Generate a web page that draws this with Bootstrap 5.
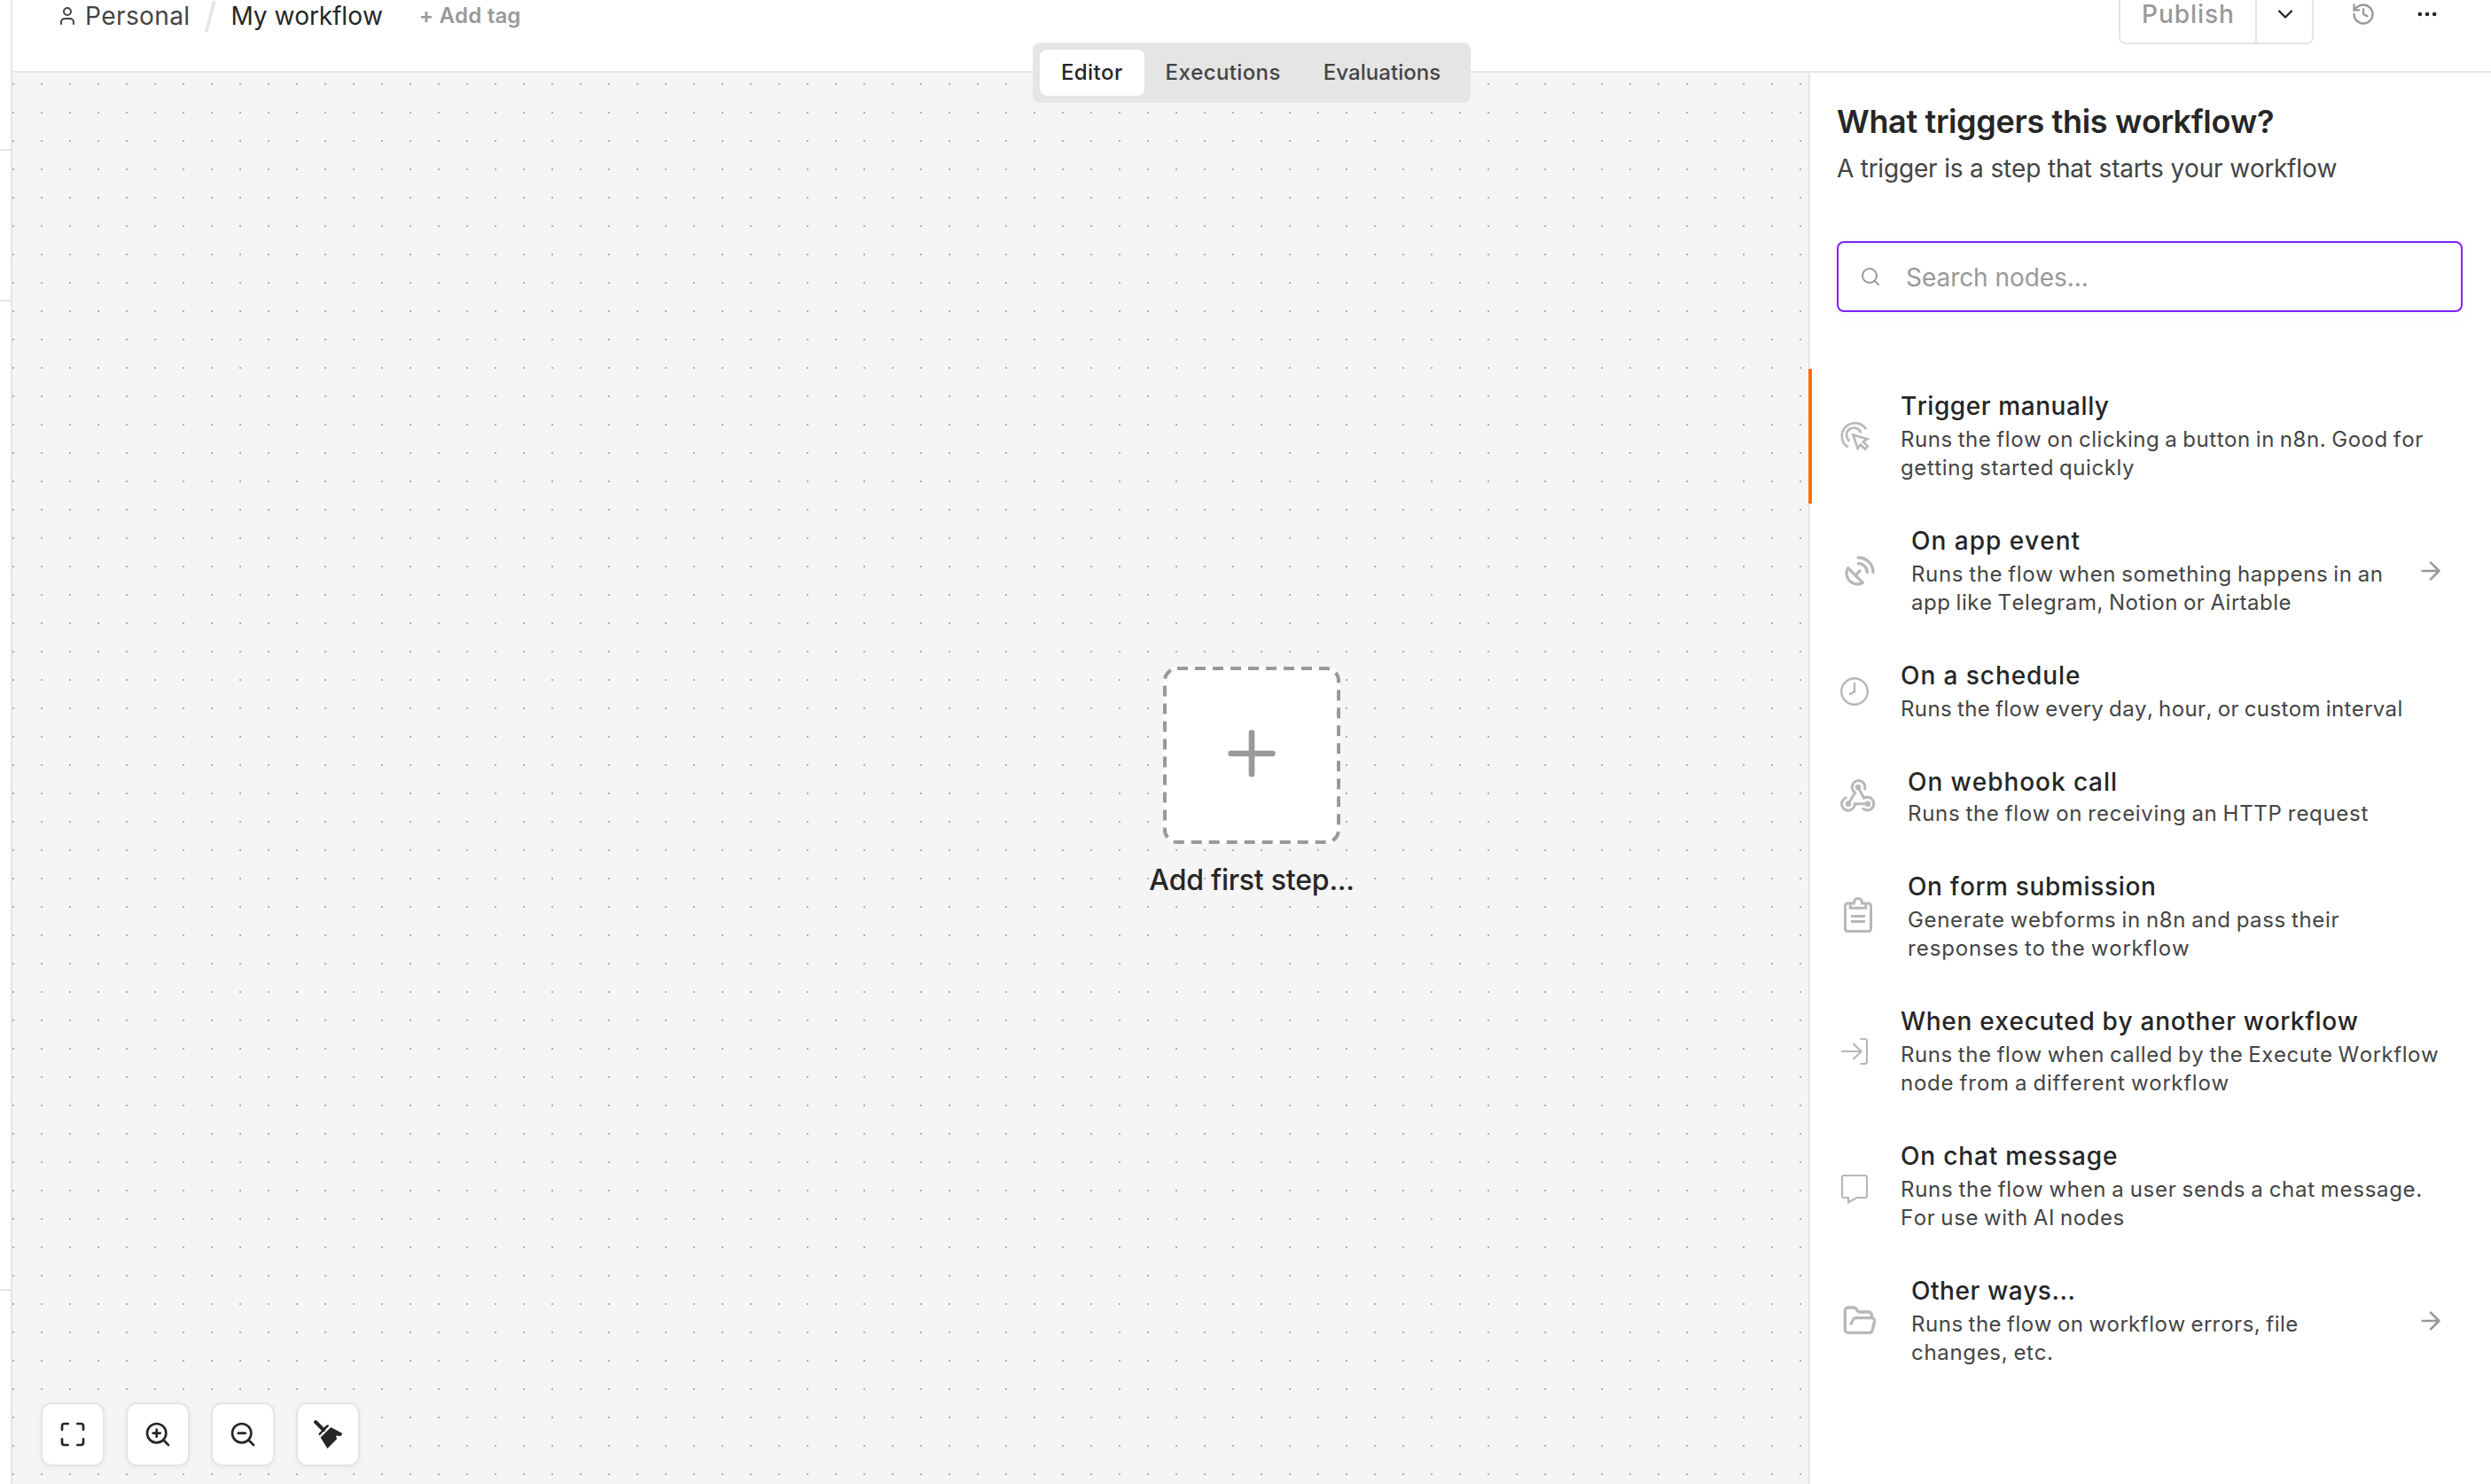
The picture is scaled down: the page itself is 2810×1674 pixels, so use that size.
<!DOCTYPE html>
<html lang="en">
<head>
<meta charset="utf-8">
<meta name="viewport" content="width=device-width, initial-scale=1">
<title>My workflow</title>
<link href="https://cdn.jsdelivr.net/npm/bootstrap@5.3.0/dist/css/bootstrap.min.css" rel="stylesheet">
<style>
body{font-family:Inter,"Liberation Sans",sans-serif;font-size:28px;color:#262626;background:#fff;overflow:hidden;font-kerning:none}
svg{fill:none;stroke:currentColor;stroke-linecap:round;stroke-linejoin:round;stroke-width:2;display:block;flex-shrink:0;overflow:visible}
.rail{width:14px;border-right:2px solid #e5e5e5;flex-shrink:0}
.rail i{display:block;height:2px;background:#e5e5e5;width:12px;margin-top:168px}
.rail i:last-child{margin-top:1114px}
/* top bar */
.topbar{height:82px;border-bottom:2px solid #e5e5e5;padding:0 58px 0 50px;line-height:36px;white-space:nowrap}
.user{width:24px;height:24px;margin:6px 8px 0 0;color:#444}
.crumb{color:#444;letter-spacing:.39px}
.slash{width:14px;height:36px;margin:0 16px 0 16px;color:#e5e5e5;stroke-width:3.500;stroke-linecap:butt}
.wfname{margin-top:0}
.addtag{font-size:24px;font-weight:600;color:#999;letter-spacing:.2px;margin:0 0 0 41px}
.pubgroup{height:68px;width:220px;margin:-18px 42px 0 0;border:2px solid #e5e5e5;border-radius:8px}
.pub{width:154px;border-right:2px solid #e5e5e5;color:#999;font-weight:500;letter-spacing:.95px;padding:14px 0 0 24px}
.chev{margin:18px 0 0 18px}
.hist{margin:2px 44px 0 0;color:#999}
.dots{margin-top:2px}
.tabbar{position:absolute;left:50%;top:48px;z-index:2;transform:translateX(-50%);width:494px;background:#e5e5e5;border-radius:8px;padding:8px;font-size:24px;font-weight:500;color:#444}
.tabbar span{padding:0 24px;height:52px;line-height:52px;border-radius:8px;letter-spacing:.38px}
.tabbar span:last-child{letter-spacing:.04px}
.tabbar .on{background:#fff;color:#262626}
/* canvas */
.board{background:#f5f5f5 url("data:image/svg+xml,%3Csvg xmlns='http://www.w3.org/2000/svg' width='32' height='32'%3E%3Crect width='2' height='2' fill='%23b0b0b0'/%3E%3C/svg%3E") 0 12px}
.node{position:absolute;left:1298px;top:670px;width:200px}
.nodebox{width:200px;height:200px;background:#fff;border-radius:16px;color:#999;padding-bottom:4px}
.dash{position:absolute;left:0;top:0;stroke-width:4;stroke-linecap:butt}
.nodelabel{font-size:32px;font-weight:500;letter-spacing:-.26px;white-space:nowrap;margin-top:21px;line-height:40px}
.ctrls{position:absolute;left:32px;top:1500px;gap:24px}
.ctrl{width:72px;height:72px;background:#fff;border:2px solid #e5e5e5;border-radius:12px;box-shadow:0 2px 6px rgba(0,0,0,.05)}
/* trigger panel */
.panel{width:770px;border-left:2px solid #e5e5e5;flex-shrink:0;background:#fff}
.phead{padding:31px 30px 0}
.phead h1{font-size:36px;font-weight:600;line-height:48px;margin:0;letter-spacing:-.32px}
.phead p{line-height:40px;color:#444;margin:9px 0 0;letter-spacing:-.16px}
.find{margin:62px 32px 64px 30px;height:80px;border:2px solid #7f22fe;border-radius:8px;padding-left:24px;color:#999;box-shadow:0 4px 20px rgba(0,0,0,.035)}
.find input{border:0;outline:0;padding:2px 0 0;margin-left:28px;font-size:28px;width:560px;color:#262626;letter-spacing:-.05px;background:transparent}
.find input::placeholder{color:#999;opacity:1}
.step{padding:24px 0 24px 34px;position:relative;color:#b8b8b8}
.step.cur::before{content:"";position:absolute;left:-2px;top:0;bottom:0;width:4px;background:#ff6d00}
.ico{width:32px;display:flex;justify-content:center;flex-shrink:0}
.ico.m{width:40px}.ico.l{width:44px}
.sharp{stroke-linecap:butt;stroke-linejoin:miter}
.txt{margin-left:36px;white-space:nowrap}
.name{font-weight:500;line-height:36px;color:#262626;letter-spacing:var(--a)}
.desc{font-size:24px;line-height:32px;margin-top:4px;color:#444;word-spacing:-1.3px}
.desc span{display:block;letter-spacing:var(--b)}
.desc span+span{letter-spacing:var(--c)}
.tight .desc{margin-top:2px}
.t1{--a:.58px;--b:.55px;--c:.59px}
.t2{--a:.99px;--b:.64px;--c:.55px}
.t3{--a:.93px;--b:.4px}
.t4{--a:.95px;--b:.69px}
.t5{--a:.66px;--b:.66px;--c:.82px}
.t6{--a:.69px;--b:.58px;--c:.76px}
.t7{--a:.83px;--b:.7px;--c:.58px}
.t8{--a:.56px;--b:.52px;--c:.68px}
.t5 svg{margin-top:-4px}
.t7 svg{margin-top:3px}
.go{position:absolute;right:52px;top:60px;color:#999}
</style>
<script src="https://cdn.jsdelivr.net/npm/bootstrap@5.3.0/dist/js/bootstrap.bundle.min.js"></script>
</head>
<body>
<div class="d-flex vh-100">
  <aside class="rail"><i></i><i></i><i></i></aside>
  <div class="flex-grow-1 d-flex flex-column position-relative">
    <header class="topbar d-flex align-items-start">
      <svg class="user" viewBox="0 0 24 24"><path d="M19 21v-2a4 4 0 0 0-4-4H9a4 4 0 0 0-4 4v2"/><circle cx="12" cy="7" r="4"/></svg>
      <span class="crumb">Personal</span>
      <svg class="slash" viewBox="0 0 14 36"><path d="M2.700 36 11.800 1"/></svg>
      <span class="wfname">My workflow</span>
      <span class="addtag">+ Add tag</span>
      <div class="d-flex pubgroup ms-auto">
        <div class="pub">Publish</div>
        <svg class="chev" width="28" height="28" viewBox="0 0 24 24"><path d="m6 9 6 6 6-6"/></svg>
      </div>
      <svg class="hist" width="28" height="28" viewBox="0 0 24 24"><path d="M3 12a9 9 0 1 0 9-9 9.750 9.750 0 0 0-6.740 2.740L3 8"/><path d="M3 3v5h5"/><path d="M12 7v5l4 2"/></svg>
      <svg class="dots" width="28" height="28" viewBox="0 0 24 24"><circle cx="12" cy="12" r="1"/><circle cx="19" cy="12" r="1"/><circle cx="5" cy="12" r="1"/></svg>
    </header>
    <nav class="tabbar d-flex"><span class="on">Editor</span><span>Executions</span><span>Evaluations</span></nav>
    <div class="d-flex flex-grow-1">
      <main class="board flex-grow-1 position-relative">
        <div class="node d-flex flex-column align-items-center">
          <div class="nodebox d-flex align-items-center justify-content-center">
            <svg class="dash" width="200" height="200"><rect x="2" y="2" width="196" height="196" rx="14" stroke-dasharray="12 8"/></svg>
            <svg width="80" height="80" viewBox="0 0 24 24"><path d="M5 12h14M12 5v14"/></svg>
          </div>
          <div class="nodelabel">Add first step...</div>
        </div>
        <div class="ctrls d-flex">
          <div class="ctrl d-flex align-items-center justify-content-center"><svg width="32" height="32" viewBox="0 0 24 24"><path d="M8 3H5a2 2 0 0 0-2 2v3M21 8V5a2 2 0 0 0-2-2h-3M3 16v3a2 2 0 0 0 2 2h3M16 21h3a2 2 0 0 0 2-2v-3"/></svg></div>
          <div class="ctrl d-flex align-items-center justify-content-center"><svg width="32" height="32" viewBox="0 0 24 24"><circle cx="11" cy="11" r="8"/><path d="m21 21-4.350-4.350M11 8v6M8 11h6"/></svg></div>
          <div class="ctrl d-flex align-items-center justify-content-center"><svg width="32" height="32" viewBox="0 0 24 24"><circle cx="11" cy="11" r="8"/><path d="m21 21-4.350-4.350M8 11h6"/></svg></div>
          <div class="ctrl d-flex align-items-center justify-content-center"><svg width="32" height="32" viewBox="0 0 32 32"><path d="M2 2 11 11" stroke-width="4"/><path d="M5.400 15.200 9 11.600 12.300 7.400 15.200 5.300Q16.800 5 17.100 6.600L6.800 17.300Q5 16.600 5.400 15.200Z" fill="currentColor" stroke="none"/><path d="M19.200 8 31.600 14.400Q32.300 15 31.600 16L30.400 18 25 17.600 26 21.300 15.300 32 7.600 19.500Z" fill="currentColor" stroke="none"/></svg></div>
        </div>
      </main>
      <section class="panel">
        <div class="phead">
          <h1>What triggers this workflow?</h1>
          <p>A trigger is a step that starts your workflow</p>
        </div>
        <div class="find d-flex align-items-center">
          <svg width="24" height="24" viewBox="0 0 24 24"><circle cx="11" cy="11" r="8"/><path d="m21 21-4.350-4.350"/></svg>
          <input type="text" placeholder="Search nodes...">
        </div>
        <div class="step cur t1 d-flex align-items-center">
          <div class="ico"><svg class="sharp" width="32" height="32" viewBox="0 0 32 32"><path stroke-width="2.600" d="M29 8.300A14.700 14.700 0 1 0 8.600 28.400M23.200 12.400A8.300 8.300 0 1 0 10.400 21.600M14.400 14.400 30.400 19.200 25.700 22.400 30.800 27.600 27.800 30.600 22.800 25.600 19.600 30Z"/></svg></div>
          <div class="txt"><div class="name">Trigger manually</div><div class="desc"><span>Runs the flow on clicking a button in n8n. Good for</span><span>getting started quickly</span></div></div>
        </div>
        <div class="step t2 d-flex align-items-center">
          <div class="ico l"><svg width="40" height="40" viewBox="0 0 24 24"><path d="M4 10a7.310 7.310 0 0 0 10 10Z"/><path d="m9 15 3-3"/><path d="M17 13a6 6 0 0 0-6-6"/><path d="M21 13A10 10 0 0 0 11 3"/></svg></div>
          <div class="txt"><div class="name">On app event</div><div class="desc"><span>Runs the flow when something happens in an</span><span>app like Telegram, Notion or Airtable</span></div></div>
          <svg class="go" width="32" height="32" viewBox="0 0 24 24"><path d="M5 12h14M12 5l7 7-7 7"/></svg>
        </div>
        <div class="step t3 d-flex align-items-center">
          <div class="ico"><svg class="sharp" width="32" height="32" viewBox="0 0 32 32"><g stroke-width="2.400"><circle cx="16" cy="16" r="14.800"/><path d="M16 6v10.200L10 19.300"/></g></svg></div>
          <div class="txt"><div class="name">On a schedule</div><div class="desc"><span>Runs the flow every day, hour, or custom interval</span></div></div>
        </div>
        <div class="step tight t4 d-flex align-items-center">
          <div class="ico m"><svg class="sharp" width="40" height="40" viewBox="0 0 40 40"><g fill="currentColor" stroke="none"><circle cx="20" cy="9" r="3.200"/><circle cx="9" cy="27.800" r="3.200"/><circle cx="31" cy="27.800" r="3.200"/></g><path stroke-width="3" d="M9 27.800 16.600 15.200A7.400 7.400 0 1 1 27.200 12.200M20 9 26.600 21.200A7.400 7.400 0 1 1 25 32.600M31 27.800H16.400A7.400 7.400 0 1 1 7.400 20.600"/></svg></div>
          <div class="txt"><div class="name">On webhook call</div><div class="desc"><span>Runs the flow on receiving an HTTP request</span></div></div>
        </div>
        <div class="step t5 d-flex align-items-center">
          <div class="ico m"><svg class="sharp" width="32" height="40" viewBox="0 0 32 40"><g stroke-width="3"><path d="M7 7H4.500Q1.500 7 1.500 10V35.500Q1.500 38.500 4.500 38.500H27.500Q30.500 38.500 30.500 35.500V10Q30.500 7 27.500 7H25M7.300 7V12.200H24.700V7H20.500Q20.500 1.500 16 1.500 11.500 1.500 11.500 7Z"/><path d="M8 21.400H24M8 27.400H24"/></g></svg></div>
          <div class="txt"><div class="name">On form submission</div><div class="desc"><span>Generate webforms in n8n and pass their</span><span>responses to the workflow</span></div></div>
        </div>
        <div class="step t6 d-flex align-items-center">
          <div class="ico"><svg class="sharp" width="32" height="32" viewBox="0 0 32 32"><path stroke-width="2.200" d="M1 16H24M14.400 7 23.600 16 14.400 25M22.500 2H27.500Q30 2 30 4.500V27.500Q30 30 27.500 30H22.500"/></svg></div>
          <div class="txt"><div class="name">When executed by another workflow</div><div class="desc"><span>Runs the flow when called by the Execute Workflow</span><span>node from a different workflow</span></div></div>
        </div>
        <div class="step t7 d-flex align-items-center">
          <div class="ico"><svg class="sharp" width="32" height="32" viewBox="0 0 32 32"><path stroke-width="2.200" d="M4 2H28Q30 2 30 4V25Q30 27 28 27H18.500L9 32.400V27H4Q2 27 2 25V4Q2 2 4 2Z"/></svg></div>
          <div class="txt"><div class="name">On chat message</div><div class="desc"><span>Runs the flow when a user sends a chat message.</span><span>For use with AI nodes</span></div></div>
        </div>
        <div class="step t8 d-flex align-items-center">
          <div class="ico l"><svg width="40" height="40" viewBox="0 0 24 24"><path d="m6 14 1.500-2.900A2 2 0 0 1 9.240 10H20a2 2 0 0 1 1.940 2.500l-1.540 6a2 2 0 0 1-1.950 1.500H4a2 2 0 0 1-2-2V5a2 2 0 0 1 2-2h3.900a2 2 0 0 1 1.690.9l.81 1.200a2 2 0 0 0 1.670.9H18a2 2 0 0 1 2 2v2"/></svg></div>
          <div class="txt"><div class="name">Other ways...</div><div class="desc"><span>Runs the flow on workflow errors, file</span><span>changes, etc.</span></div></div>
          <svg class="go" width="32" height="32" viewBox="0 0 24 24"><path d="M5 12h14M12 5l7 7-7 7"/></svg>
        </div>
      </section>
    </div>
  </div>
</div>
</body>
</html>
